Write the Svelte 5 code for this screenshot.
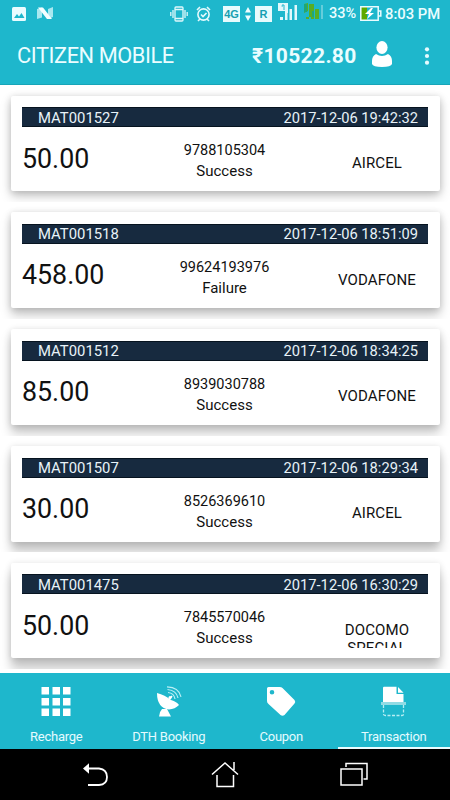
<script>
  const transactions = [
    { id: 'MAT001527', time: '2017-12-06 19:42:32', amount: '50.00', phone: '9788105304', status: 'Success', operator: 'AIRCEL' },
    { id: 'MAT001518', time: '2017-12-06 18:51:09', amount: '458.00', phone: '99624193976', status: 'Failure', operator: 'VODAFONE' },
    { id: 'MAT001512', time: '2017-12-06 18:34:25', amount: '85.00', phone: '8939030788', status: 'Success', operator: 'VODAFONE' },
    { id: 'MAT001507', time: '2017-12-06 18:29:34', amount: '30.00', phone: '8526369610', status: 'Success', operator: 'AIRCEL' },
    { id: 'MAT001475', time: '2017-12-06 16:30:29', amount: '50.00', phone: '7845570046', status: 'Success', operator: 'DOCOMO SPECIAL' }
  ];
  const tabs = ['Recharge', 'DTH Booking', 'Coupon', 'Transaction'];
  const cells = [0, 11, 21.5];
</script>

<div class="screen">
  <header>
    <div class="status">
      <div class="left">
        <svg width="14" height="14" viewBox="0 0 14 14"><rect width="14" height="14" rx="1.5" fill="#eafcff" /><path d="M2 11l3-4 2 2.5L9.500 6l3 5z" fill="#1eb7cc" /></svg>
        <svg width="16" height="13" viewBox="0 0 16 13"><path d="M0 2l5-1.500v10L0 12zM11 2l5-2v10l-5 2z" fill="#a9e8f0" /><path d="M1 .5h5l9 11.500h-5z" fill="#f4feff" /></svg>
      </div>
      <div class="right">
        <svg width="18" height="16" viewBox="0 0 18 16" fill="none" stroke="#dff8fb" stroke-width="1.3"><rect x="5" y="1" width="8" height="14" rx="1" /><path d="M5 3.500h8M5 12.500h8M3 4v8M15 4v8M.8 6v4M17.200 6v4" /></svg>
        <svg class="alarm" width="15" height="16" viewBox="0 0 15 16" fill="none" stroke="#e5fafd" stroke-width="1.6"><circle cx="7.500" cy="8.500" r="5.600" /><path d="M1 4l3-3M14 4l-3-3M4 13l-2 2M11 13l2 2M5 8.500l2 2 3.500-3.500" /></svg>
        <span class="badge fourg">4G</span>
        <svg class="updown" width="6" height="16" viewBox="0 0 6 16" fill="#f1fdff"><path d="M3 1l3 5.500H0zM3 15l3-5.500H0z" /></svg>
        <span class="badge roam">R</span>
        <svg class="sim" width="20" height="17" viewBox="0 0 20 17"><path d="M0 0h10v10H7v-2H0zM2 14h3v3H2zM7 10h2.500v7H7zM11.500 6H14v11h-2.500zM16.500 2H19v15h-2.500z" fill="#dff8fb" /><path d="M4 2h2v5M3.500 3H5" fill="none" stroke="#1eb7cc" /></svg>
        <svg class="sim2" width="20" height="17" viewBox="0 0 20 17"><path d="M0 1l4-1v8l-4 2zM5 1h5v9H7v4H5zM2 14h3v2H2zM7 10h3v6H7zM11 6h4v10h-4z" fill="#58ad24" /><path d="M0 1h3v8H0zM8 8h2v6H8z" fill="#20a774" /><path d="M17 2h2v14h-2z" fill="#65cddb" /></svg>
        <span class="pct">33%</span>
        <svg class="battery" width="22" height="15" viewBox="0 0 22 15"><path d="M1 1h6v13H1z" fill="#5ea900" /><path d="M.8.800h17.400v13.400H.8zM18.500 5h2.300v5h-2.300" fill="none" stroke="#eafcff" stroke-width="1.500" /><path d="M11 2L5 8h4l-2 5 7-6h-4l3-5z" fill="#fff" /></svg>
        <span class="clock">8:03 PM</span>
      </div>
    </div>
    <div class="toolbar">
      <h1>CITIZEN MOBILE</h1>
      <strong>₹10522.80</strong>
      <svg class="user" width="20" height="26" viewBox="0 0 20 26" fill="#fff"><ellipse cx="10" cy="6.500" rx="5.600" ry="6.500" /><path d="M4 13q6 4 12 0 4 2 4 7v3q-1 3-10 3T0 23v-3q0-5 4-7z" /></svg>
      <svg class="more" width="6" height="18" viewBox="0 0 6 18" fill="#e7fbff"><circle cx="3" cy="2.300" r="2.100" /><circle cx="3" cy="9" r="2.100" /><circle cx="3" cy="15.700" r="2.100" /></svg>
    </div>
  </header>

  <main>
    {#each transactions as t, i}
      <div class="row">
        <article style:--depth="{5 + i * 1.5}px">
          <div class="bar"><span>{t.id}</span><span class="time">{t.time}</span></div>
          <div class="body">
            <div class="amount">{t.amount}</div>
            <div class="detail"><span class="phone">{t.phone}</span><span class="state">{t.status}</span></div>
            <div class="operator">{t.operator}</div>
          </div>
        </article>
      </div>
    {/each}
  </main>

  <nav>
    {#each tabs as tab, i}
      <div class="tab" class:active={i === 3}>
        <svg width="30" height="32" viewBox="0 0 30 32">
          {#if i === 0}
            {#each cells as y}{#each cells as x}<rect x={x + .5} y={y + 1} width="7.500" height="7.500" fill="#fff" />{/each}{/each}
          {:else if i === 1}
            <path d="M3 7q8 2 14 7 6 2 8 5-4 4-10 4.500Q3 22 3 7z" fill="#fff" /><path d="M8 23h5l4 7.500H5q.5-5 3-7.500z" fill="#fff" /><path d="M15 14l3-4" stroke="#fff" stroke-width="1.500" /><circle cx="16" cy="11.500" r="1.500" fill="#fff" />
            <path d="M14 6.500q6 .5 7 6.500M13.500 3.500q9 1 10.500 8.500M13 .8q12 .5 14 10" fill="none" stroke="#b9eff5" stroke-width="1.200" />
          {:else if i === 2}
            <path fill-rule="evenodd" d="M2.500 1h11q2 0 3 1l12 12q1.500 2 0 3.500L18.500 29q-2 1.500-4 0L2.500 18q-1.500-1-1.500-3V2.500Q1 1 2.500 1zM6 4a2.300 2.300 0 100 4.600A2.300 2.300 0 006 4z" fill="#fff" />
          {:else}
            <path d="M5 .8h12.500V8h7v8H4V2q0-1.200 1-1.200z" fill="#fff" /><path d="M19 1l5.500 5.700H19z" fill="#fff" /><path d="M2 16h25v3H2z" fill="#91dbe4" /><path d="M4.500 19v9q0 1.500 2 1.500H23q1.500 0 1.500-1.500v-9" fill="none" stroke="#b6edf3" stroke-width="1.300" stroke-dasharray="3 1.500" />
          {/if}
        </svg>
        <span>{tab}</span>
      </div>
    {/each}
  </nav>

  <footer>
    <svg width="28" height="28" viewBox="0 0 28 28" fill="none" stroke="#fff" stroke-width="1.800"><path d="M6 7.500h11q8 1 8 8.500t-8 8H6" /><path d="M1 7.500l6-5.300v10.600z" fill="#fff" stroke="none" /></svg>
    <svg width="28" height="28" viewBox="0 0 28 28" fill="none" stroke="#fff" stroke-width="1.500"><path d="M1 13.500L14 2l13 11.500M6 14v11.500h16.500V14M23 1v8" /></svg>
    <svg width="28" height="28" viewBox="0 0 28 28" fill="none" stroke="#fff" stroke-width="1.500"><rect x="1" y="8" width="21" height="16" /><path d="M6 6V2.500h21v15.500h-3.500" /></svg>
  </footer>
</div>

<style>
  .screen { width: 450px; height: 800px; display: flex; flex-direction: column; overflow: hidden; background: #fff; font-family: Roboto, sans-serif; color: #111; }
  svg { display: block; flex: none; }
  header { height: 85px; flex: none; box-sizing: border-box; background: #1eb7cc; color: #eafdff; border-bottom: 1px solid #18a5b8; }
  .status { height: 27px; display: flex; justify-content: space-between; padding: 0 9px 0 12px; }
  .left { display: flex; align-items: center; gap: 11px; }
  .right { display: flex; align-items: center; font-size: 14px; font-weight: 500; }
  .alarm { margin-left: 8px; }
  .badge { box-sizing: border-box; height: 16px; background: #e8fbfd; color: #179fb2; font: bold 11px/16px "Liberation Sans", sans-serif; text-align: center; }
  .fourg { width: 17px; margin-left: 12px; }
  .updown { margin-left: 5px; }
  .roam { width: 17px; margin-left: 4px; }
  .sim { margin-left: 6px; margin-top: -4px; }
  .sim2 { margin-left: 6px; margin-top: -4px; }
  .pct { margin-left: 5px; width: 30px; white-space: nowrap; font-size: 14.500px; }
  .battery { margin-left: 1px; }
  .clock { margin-left: 3px; width: 56px; white-space: nowrap; font-size: 14.800px; }
  .toolbar { height: 57px; display: flex; align-items: center; padding: 0 20px 0 17px; }
  h1 { margin: 0; width: 235px; font-size: 21.800px; font-weight: 400; letter-spacing: -0.43px; white-space: nowrap; }
  strong { width: 120px; font-size: 21px; font-weight: 700; letter-spacing: 0.35px; white-space: nowrap; }
  .user { margin-top: -3px; }
  .more { margin-left: 32px; }
  main { height: 588px; flex: none; background: #fff; }
  .row { height: 116.850px; box-sizing: border-box; padding: 10.500px 10.500px 0; overflow: hidden; }
  article { height: 95.500px; box-sizing: border-box; padding: 11.500px 11.500px 0; background: #fff; border-radius: 2px; box-shadow: 0 var(--depth) 11px rgba(0, 0, 0, 0.22), 0 1px 7px rgba(0, 0, 0, 0.14); }
  .bar { height: 20px; box-sizing: border-box; padding: 1px 10px 0 16px; display: flex; justify-content: space-between; align-items: center; background: #172a3f; color: #e8f2f8; font-size: 14.850px; border: solid #06131f; border-width: 1px 0; white-space: nowrap; }
  .time { font-size: 14.700px; }
  .body { display: flex; height: 55px; }
  .amount { flex: none; width: 135px; padding-top: 14.500px; font-size: 26.800px; line-height: 34px; }
  .detail { flex: none; width: 135px; padding-top: 14px; display: flex; flex-direction: column; align-items: center; font-size: 15px; line-height: 20.500px; }
  .phone { font-size: 14.500px; }
  .state { margin-top: -0.500px; }
  .operator { flex: none; width: 104px; margin-left: 33px; height: 27px; margin-top: 26.700px; font-size: 15px; line-height: 18px; text-align: center; overflow: hidden; letter-spacing: 0.1px; }
  nav { height: 76px; flex: none; background: #1eb7cc; display: flex; box-sizing: border-box; }
  .tab { width: 112.500px; display: flex; flex-direction: column; align-items: center; box-sizing: border-box; padding-top: 13px; color: #e5fbff; font-size: 13px; letter-spacing: -0.25px; border-bottom: 2px solid transparent; }
  .tab span { margin-top: 10px; line-height: 17px; }
  .active { border-bottom-color: #e9fcff; }
  footer { flex: 1; background: #000; display: flex; justify-content: space-between; padding: 12px 82px 0; }
</style>
